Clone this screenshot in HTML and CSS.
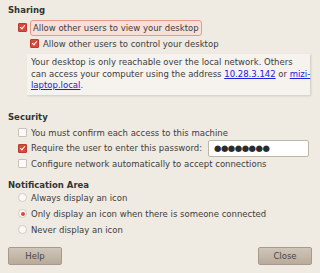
FILE: index.html
```html
<!DOCTYPE html>
<html>
<head>
<meta charset="utf-8">
<link rel="stylesheet" href="styles.css">
</head>
<body>
<div class="dialog">
  <div class="section s1">
    <div class="heading">Sharing</div>
    <div class="row r-focus">
      <span class="check on"></span>
      <span class="focus">Allow other users to view your desktop</span>
    </div>
    <div class="row sub">
      <span class="check on"></span>
      <span>Allow other users to control your desktop</span>
    </div>
    <div class="info">Your desktop is only reachable over the local network. Others<br>can access your computer using the address <a href="#">10.28.3.142</a> or <a href="#">mizi-<br>laptop.local</a>.</div>
  </div>
  <div class="section s2">
    <div class="heading">Security</div>
    <div class="row">
      <span class="check"></span>
      <span>You must confirm each access to this machine</span>
    </div>
    <div class="row pw">
      <span class="check on"></span>
      <span class="grow">Require the user to enter this password:</span>
      <span class="entry">●●●●●●●●</span>
    </div>
    <div class="row">
      <span class="check"></span>
      <span>Configure network automatically to accept connections</span>
    </div>
  </div>
  <div class="section s3">
    <div class="heading">Notification Area</div>
    <div class="row">
      <span class="radio"></span>
      <span>Always display an icon</span>
    </div>
    <div class="row">
      <span class="radio on"></span>
      <span>Only display an icon when there is someone connected</span>
    </div>
    <div class="row">
      <span class="radio"></span>
      <span>Never display an icon</span>
    </div>
  </div>
  <div class="buttons">
    <button class="btn">Help</button>
    <button class="btn">Close</button>
  </div>
</div>
</body>
</html>
```
FILE: styles.css
```css
html, body {
  margin: 0;
  padding: 0;
  background: #f0ebe2;
}
body {
  width: 320px;
  height: 273px;
  overflow: hidden;
  font-family: "DejaVu Sans", sans-serif;
  font-size: 8.5px;
  color: #3c3c3c;
}
.dialog {
  padding: 4px 8px 0 8px;
  display: flex;
  flex-direction: column;
}
.section {
  display: flex;
  flex-direction: column;
}
.s1 {
  margin-bottom: 16px;
}
.s2 {
  margin-bottom: 7px;
}
.s3 .heading {
  margin-bottom: -1px;
}
.heading {
  font-weight: bold;
  color: #333;
  line-height: 12px;
  margin-bottom: 2px;
}
.row {
  display: flex;
  align-items: center;
  height: 16px;
  padding-left: 10px;
  white-space: nowrap;
}
.row.r-focus {
  height: 19px;
}
.row.sub {
  padding-left: 22px;
  height: 13px;
}
.row.pw {
  height: 15px;
  padding-right: 3px;
}
.grow {
  flex: 1;
}
.check {
  width: 7px;
  height: 7px;
  border: 1px solid #c8c2b8;
  background: #fbfaf8;
  border-radius: 1px;
  margin-right: 4px;
  position: relative;
  flex: none;
}
.check.on {
  background: #d9483b;
  border-color: #c0392d;
}
.check.on::after {
  content: "";
  position: absolute;
  left: 2px;
  top: 0px;
  width: 2px;
  height: 4px;
  border: solid #fff;
  border-width: 0 1px 1px 0;
  transform: rotate(40deg);
}
.radio {
  width: 7px;
  height: 7px;
  border: 1px solid #d2ccc2;
  background: #fbfaf8;
  border-radius: 50%;
  margin-right: 4px;
  position: relative;
  flex: none;
}
.radio.on::after {
  content: "";
  position: absolute;
  left: 1.5px;
  top: 1.5px;
  width: 4px;
  height: 4px;
  border-radius: 50%;
  background: #d9483b;
}
.focus {
  border: 1px solid #e59a8a;
  background: #f8e0d8;
  border-radius: 3px;
  padding: 2px 2px;
  margin-left: -1px;
}
.info {
  margin: 4px 2px 0 19px;
  background: #f6f3ef;
  box-shadow: 1px 1px 2px rgba(0,0,0,0.15);
  padding: 3px 4px 3px 4px;
  line-height: 11.5px;
  white-space: nowrap;
}
.info a {
  color: #2020e0;
  text-decoration: underline;
}
.entry {
  width: 101px;
  height: 17px;
  border: 1px solid #bdb5a8;
  border-radius: 2px;
  background: #fff;
  color: #2b2b2b;
  font-size: 8.5px;
  letter-spacing: -0.5px;
  display: flex;
  align-items: center;
  padding-left: 5px;
  box-sizing: border-box;
  flex: none;
}
.buttons {
  display: flex;
  justify-content: space-between;
  margin-top: 9px;
}
.btn {
  width: 54px;
  height: 18px;
  border: 1px solid #a8998a;
  border-radius: 2px;
  background: linear-gradient(#cfc5b8, #b8ab9b);
  font-family: "DejaVu Sans", sans-serif;
  font-size: 8.5px;
  color: #4a4540;
  padding: 0;
}
```
